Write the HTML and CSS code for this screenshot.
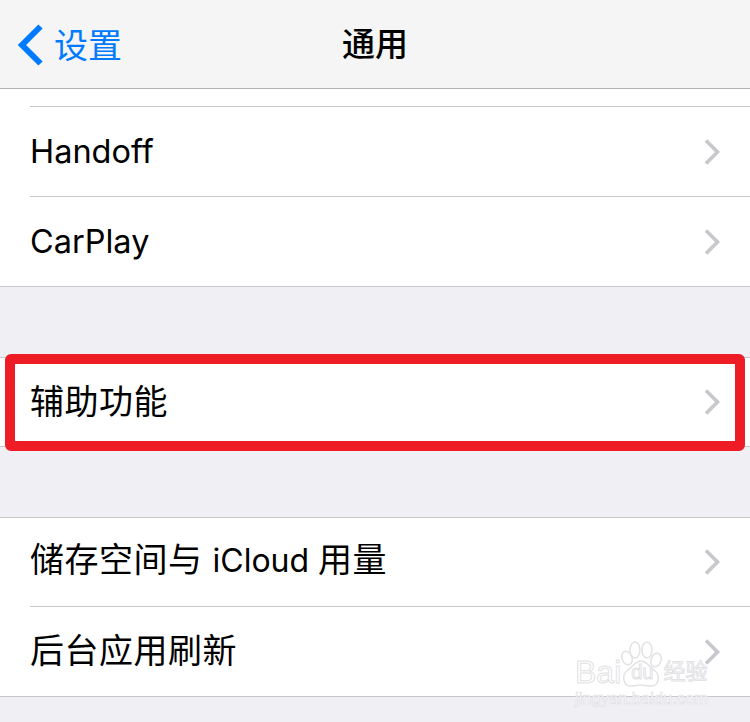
FILE: index.html
```html
<!DOCTYPE html>
<html lang="zh-CN">
<head>
  <meta charset="UTF-8">
  <title>通用</title>
  <link rel="stylesheet" href="styles.css">
</head>
<body>
  <div class="screen">
    <div class="navbar">
      <div class="nav-back">
        <svg class="back-icon" width="26" height="42" viewBox="0 0 26 42">
          <path d="M23.5 2.5 L5 21 L23.5 39.5" fill="none" stroke="#007aff" stroke-width="6"/>
        </svg>
        <span class="back-label">设置</span>
      </div>
      <div class="nav-title">通用</div>
    </div>

    <div class="group first">
      <div class="row stub"></div>
      <div class="row">
        <span class="latin">Handoff</span>
        <svg class="chevron" width="18" height="28" viewBox="0 0 18 28"><path d="M2 2.5 L13.5 14 L2 25.5" fill="none" stroke="#c7c7cc" stroke-width="3.6"/></svg>
      </div>
      <div class="row">
        <span class="latin">CarPlay</span>
        <svg class="chevron" width="18" height="28" viewBox="0 0 18 28"><path d="M2 2.5 L13.5 14 L2 25.5" fill="none" stroke="#c7c7cc" stroke-width="3.6"/></svg>
      </div>
    </div>

    <div class="group highlighted">
      <div class="row short">
        <span class="cjk">辅助功能</span>
        <svg class="chevron" width="18" height="28" viewBox="0 0 18 28"><path d="M2 2.5 L13.5 14 L2 25.5" fill="none" stroke="#c7c7cc" stroke-width="3.6"/></svg>
      </div>
      <div class="red-box"></div>
    </div>

    <div class="group">
      <div class="row short">
        <span class="cjk">储存空间与<span class="inline-latin">iCloud</span>用量</span>
        <svg class="chevron" width="18" height="28" viewBox="0 0 18 28"><path d="M2 2.5 L13.5 14 L2 25.5" fill="none" stroke="#c7c7cc" stroke-width="3.6"/></svg>
      </div>
      <div class="row">
        <span class="cjk">后台应用刷新</span>
        <svg class="chevron" width="18" height="28" viewBox="0 0 18 28"><path d="M2 2.5 L13.5 14 L2 25.5" fill="none" stroke="#c7c7cc" stroke-width="3.6"/></svg>
      </div>
    </div>

    <div class="watermark">
      <svg class="paw" width="46" height="50" viewBox="0 0 46 50">
        <g fill="#fff" fill-opacity="0.6" stroke="#e2e2e5" stroke-width="1.5">
          <ellipse cx="8" cy="17" rx="5" ry="7" transform="rotate(-20 8 17)"/>
          <ellipse cx="16" cy="9" rx="5" ry="8"/>
          <ellipse cx="28" cy="9" rx="5" ry="8"/>
          <ellipse cx="37" cy="19" rx="5" ry="7" transform="rotate(20 37 19)"/>
          <path d="M22 20 C28 20 30 26 35 29 C42 34 40 45 32 45 C27 45 26 44 22 44 C18 44 16 45 12 45 C4 45 2 34 9 29 C14 26 16 20 22 20 Z"/>
        </g>
      </svg>
      <div class="wm-brand"><span class="wm-bai">Bai</span><span class="wm-du">du</span><span class="wm-cn">经验</span></div>
      <div class="wm-url">jingyan.baidu.com</div>
    </div>
  </div>
</body>
</html>
```

FILE: styles.css
```css
body {
  margin: 0;
  background-color: #efeff4;
  font-family: Inter, "Noto Sans CJK SC", sans-serif;
}

.screen {
  position: relative;
  width: 750px;
  height: 722px;
  overflow: hidden;
}

.navbar {
  position: relative;
  height: 88px;
  display: flex;
  align-items: center;
  justify-content: center;
  background-color: #f5f5f6;
  border-bottom: 1px solid #b2b2b2;
}

.nav-back {
  position: absolute;
  left: 17px;
  top: 23px;
  display: flex;
  align-items: center;
  gap: 11px;
  color: #007aff;
  font-family: "Noto Sans CJK SC", sans-serif;
  font-size: 34px;
  line-height: 42px;
}

.back-label {
  padding-bottom: 2px;
}

.nav-title {
  font-family: "Noto Sans CJK SC", sans-serif;
  font-size: 33px;
  font-weight: 500;
  line-height: 42px;
  color: #000;
  padding-bottom: 4px;
}

.group {
  position: relative;
  background-color: #fff;
  border-top: 1px solid #c8c7cc;
  border-bottom: 1px solid #c8c7cc;
  margin-bottom: 70px;
}

.group.first {
  border-top: none;
}

.row {
  display: flex;
  align-items: center;
  justify-content: space-between;
  height: 89px;
  margin-left: 30px;
  padding-right: 28px;
  color: #000;
  border-bottom: 1px solid #c8c7cc;
}

.row:last-of-type,
.highlighted .row {
  border-bottom: none;
}

.row.stub {
  height: 17px;
}

.row.short {
  height: 88px;
}

.latin {
  font-size: 32.5px;
}

.cjk {
  font-family: "Noto Sans CJK SC", sans-serif;
  font-size: 34px;
  letter-spacing: 0.5px;
  line-height: 40px;
  padding-bottom: 5px;
}

.inline-latin {
  font-family: Inter, sans-serif;
  font-size: 32px;
  letter-spacing: 0;
  margin: 0 9px 0 10px;
}

.red-box {
  position: absolute;
  left: 5px;
  right: 5px;
  top: -4px;
  bottom: -5px;
  border: 10px solid #ee1c25;
  border-radius: 6px;
}

.watermark {
  position: absolute;
  left: 575px;
  top: 641px;
  width: 140px;
  color: #fff;
  font-family: "Liberation Sans", "Noto Sans CJK SC", sans-serif;
}

.paw {
  position: absolute;
  left: 44px;
  top: 0;
}

.wm-brand {
  position: relative;
  display: flex;
  align-items: center;
  margin-top: 16px;
  font-size: 32px;
  line-height: 30px;
  white-space: nowrap;
  -webkit-text-stroke: 1px #e2e2e5;
}

.wm-du {
  font-size: 20px;
  margin-left: 10px;
}

.wm-cn {
  font-size: 22px;
  margin-left: 10px;
}

.wm-url {
  position: relative;
  margin-top: 2px;
  font-size: 16.5px;
  line-height: 18px;
  white-space: nowrap;
  -webkit-text-stroke: 0.6px #dcdce0;
}
```
